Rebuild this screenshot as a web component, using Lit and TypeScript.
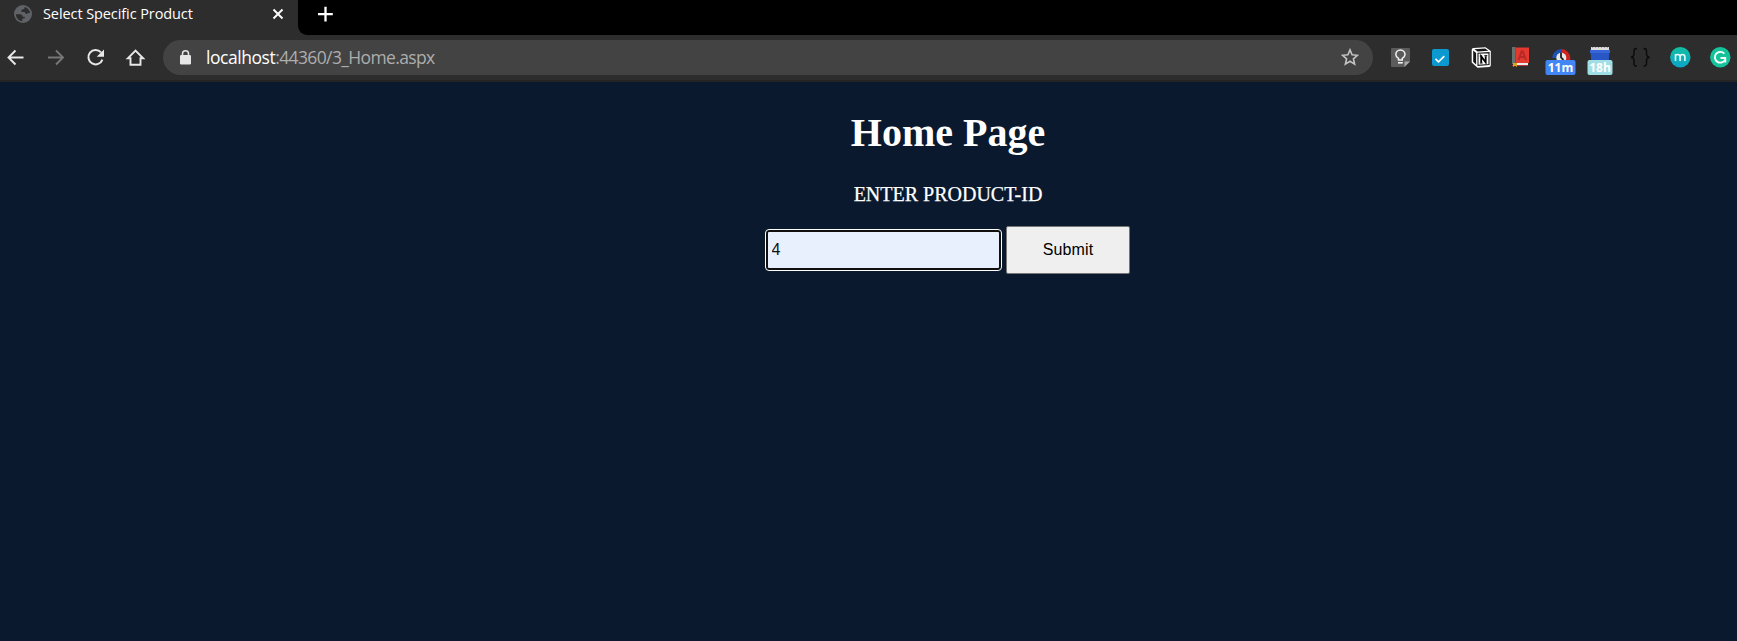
import { LitElement, html, css, svg } from "lit";
import { customElement } from "lit/decorators.js";

@customElement("tab-strip")
class TabStrip extends LitElement {
  static styles = css`
    :host { display: block; height: 35px; background: #2d2d2d; color: #fff; font-family: "Open Sans", sans-serif; }
    .strip { display: flex; height: 35px; }
    .tab { display: flex; align-items: flex-start; width: 298px; box-sizing: border-box; padding-left: 14px; flex: none; }
    .globe { display: block; margin-top: 5px; }
    .title { margin-left: 11px; width: 229px; font-size: 14.5px; line-height: 28px; white-space: nowrap; letter-spacing: -0.09px; }
    .close { display: block; margin-top: 8px; }
    .rest { flex: 1; background: #000; border-bottom-left-radius: 9px; padding: 6px 0 0 19px; }
    .rest svg { display: block; }
  `;
  render() {
    return html`<div class="strip">
      <div class="tab">
        <svg class="globe" width="18" height="18" viewBox="0 0 18 18">
          <circle cx="9" cy="9" r="9" fill="#5f6368" />
          <path d="M1.9 9.200h4.200c1.700 0 2.600.9 2.600 2.500h2v1.900H8.300v2.500C4.700 15.900 1.900 12.900 1.900 9.200z" fill="#2d2d2d" />
          <path d="M10.600 2.100c2.900.6 5.100 3.100 5.500 6h-1.900c-.6 0-1 .8-1.600.8-1.300 0-1.800-.8-1.800-1.800H7.400V5.300c0-.9.8-.9 1.700-.9.900 0 1.500-1 1.500-2.300z" fill="#2d2d2d" />
        </svg>
        <span class="title">Select Specific Product</span>
        <svg class="close" width="12" height="12" viewBox="0 0 12 12"><path d="M1.500 1.500l9 9M10.500 1.500l-9 9" stroke="#fff" stroke-width="1.900" /></svg>
      </div>
      <div class="rest">
        <svg width="18" height="16" viewBox="0 0 18 16"><path d="M8.500.8v14.600M1 8.100h14.800" stroke="#fff" stroke-width="2.300" /></svg>
      </div>
    </div>`;
  }
}

const extensionIcons = [
  svg`<path d="M8 8h17a1 1 0 0 1 1 1v12.500L20.500 27H8a1 1 0 0 1-1-1V9a1 1 0 0 1 1-1z" fill="#5b5b5b"/><path d="M20.500 27v-5.500H26z" fill="#aaa"/>
    <path d="M14.500 20v-1.600c-1.700-1-2.700-2.200-2.700-3.900a4.600 4.600 0 0 1 9.200 0c0 1.700-1 2.900-2.700 3.900V20z" fill="none" stroke="#f2f2f2" stroke-width="1.500"/><path d="M14 22h4.800v1.600H14z" fill="#f2f2f2"/>`,
  svg`<rect x="8" y="9" width="17" height="17" rx="2" fill="#0b99cf"/><path d="M11.500 18.900l3 2.900 5.800-5.600" fill="none" stroke="#fff" stroke-width="1.600"/>`,
  svg`<path d="M9.500 8L21.500 7.200l5.300 3.700v14.400a1.800 1.800 0 0 1-1.800 1.800l-11.500.6-5.800-5.300V9.800A1.800 1.800 0 0 1 9.500 8z" fill="#fff"/>
    <path d="M9.200 10.500l2.900 2.400v11.600l-2.900-2.800z" fill="#161616"/><path d="M10.400 9.300l10.700-.7 3.200 2.200-10.600.8z" fill="#161616"/>
    <path d="M14 13.300l11-.7v11.900l-11 .8z" fill="#fff" stroke="#161616" stroke-width="1.100"/>
    <path d="M17.200 22.700v-6.200l4.500 5.800v-6.100" fill="none" stroke="#000" stroke-width="1.800"/><path d="M15.700 16h2.500M20.400 15.700h2.900M15.800 23h2.800" stroke="#000" stroke-width="1"/>`,
  svg`<path d="M8 7h3.500v17H8z" fill="#69716f"/><path d="M11.500 7.500H25V23H11.500z" fill="#e5392f"/><path d="M14.500 20l3.200-8.800h1l3.200 8.800M15.800 17h4.800" fill="none" stroke="#b52a29" stroke-width="2"/><path d="M11 23h13v2H11z" fill="#e9edf0"/><path d="M8 25h16v1H8z" fill="#b63434"/><path d="M9 23h4v4l-2-1.300L9 27z" fill="#d3a91b"/>`,
  svg`<path d="M8.300 18a9 9 0 0 1 9-9v9z" fill="#1c51b5"/><path d="M17.300 9a9 9 0 0 1 9 9v2h-9z" fill="#cf241b"/><circle cx="17.300" cy="17.700" r="5" fill="#e8e8e8"/><path d="M17 12.500v5l2.500 2.500" fill="none" stroke="#222" stroke-width="1.800"/>
    <rect x="1.500" y="20" width="30" height="15" rx="2" fill="#4285f4"/><text x="16.500" y="32" text-anchor="middle" font-family="Open Sans, sans-serif" font-weight="700" font-size="12" fill="#fff">11m</text>`,
  svg`<path d="M7.500 9h19l-.6 11H8.100z" fill="#2856c5"/><path d="M7 10h20v3H7z" fill="#3565d8"/><path d="M8 7h18v3H8z" fill="#ddd"/><path d="M9 7.500h16" stroke="#999" stroke-width="1" stroke-dasharray="1 2"/>
    <rect x="4.500" y="20" width="25" height="15" rx="2" fill="#a1dfe7"/><text x="17" y="32" text-anchor="middle" font-family="Open Sans, sans-serif" font-weight="700" font-size="12" fill="#fff">18h</text>`,
  svg`<path d="M14 8.500c-3 0-3 1-3 3.300v2.200c0 2-.8 3-3 3.300 2.200.3 3 1.300 3 3.300v2.200c0 2.300 0 3.300 3 3.300M20.500 8.500c3 0 3 1 3 3.300v2.200c0 2 .8 3 3 3.300-2.200.3-3 1.300-3 3.300v2.200c0 2.300 0 3.300-3 3.300" fill="none" stroke="#0c0c0c" stroke-width="1.500"/>`,
  svg`<circle cx="17.300" cy="17.300" r="10.200" fill="url(#teal)"/><path d="M12.500 21v-7m0 2.600c0-1.600.8-2.100 2.200-2.100 1.600 0 2.400.8 2.400 2.400V21m0-4.100c0-1.600.8-2.400 2.300-2.400 1.700 0 2.500.8 2.500 2.400V21" fill="none" stroke="#e7fafa" stroke-width="1.600"/>
    <defs><linearGradient id="teal" x1="0" y1="0" x2="0" y2="1"><stop offset="0" stop-color="#12bfa1"/><stop offset="1" stop-color="#0ba5ca"/></linearGradient></defs>`,
  svg`<circle cx="17.300" cy="17.300" r="10.200" fill="#15c39a"/><path d="M21.300 13.600a5.400 5.400 0 1 0 .7 6.300" fill="none" stroke="#fff" stroke-width="1.900"/><path d="M17.500 18h4.800v4.500" fill="none" stroke="#fff" stroke-width="1.800"/>`,
];

@customElement("nav-toolbar")
class NavToolbar extends LitElement {
  static styles = css`
    :host { display: block; height: 47px; background: #2d2d2d; box-sizing: border-box; border-bottom: 2px solid #242424; font-family: "Open Sans", sans-serif; }
    .bar { display: flex; align-items: flex-start; padding-top: 5px; }
    svg { display: block; flex: none; }
    .nav { display: flex; width: 163px; flex: none; }
    .nav svg { margin-right: 6px; }
    .pill { display: flex; width: 1210px; height: 35px; border-radius: 18px; background: #434343; flex: none; box-sizing: border-box; padding-left: 17px; }
    .lock { margin-top: 10px; }
    .url { margin-left: 15px; width: 1135px; font-size: 17.5px; line-height: 35px; color: #adadad; white-space: nowrap; letter-spacing: -0.63px; }
    .host { color: #fff; letter-spacing: -0.45px; }
    .star { margin-top: 8px; }
    .extensions { display: flex; margin-left: 11px; gap: 5.9px; }
  `;
  render() {
    return html`<div class="bar">
      <div class="nav">
        <svg width="34" height="35" viewBox="0 0 34 35"><path d="M23.500 17.500H8.800M15.500 10.500l-7 7 7 7" fill="none" stroke="#e8e8e8" stroke-width="1.900"/></svg>
        <svg width="34" height="35" viewBox="0 0 34 35"><path d="M8 17.500h14.700M16 10.500l7 7-7 7" fill="none" stroke="#777" stroke-width="1.900"/></svg>
        <svg width="34" height="35" viewBox="0 0 34 35"><path d="M21 12.400a7.200 7.200 0 1 0 1.400 7.200" fill="none" stroke="#e8e8e8" stroke-width="2"/><path d="M24 9.500v7.300h-7.300z" fill="#e8e8e8"/></svg>
        <svg width="34" height="35" viewBox="0 0 34 35"><path d="M7.800 18.300L15.500 10.600l7.700 7.700h-2.700v6.400h-10v-6.400z" fill="none" stroke="#e8e8e8" stroke-width="1.900"/></svg>
      </div>
      <div class="pill">
        <svg class="lock" width="11" height="15" viewBox="0 0 11 15"><rect y="5" width="11" height="9.500" rx="1.200" fill="#e6e6e6"/><path d="M2.500 6V3.800a3 3 0 0 1 6 0V6" fill="none" stroke="#e6e6e6" stroke-width="1.500"/></svg>
        <span class="url"><span class="host">localhost</span>:44360/3_Home.aspx</span>
        <svg class="star" width="18" height="18" viewBox="0 0 18 18"><path d="M9 1.900l2.100 4.900 5.400.5-4.100 3.500 1.200 5.300L9 13.300l-4.600 2.800 1.200-5.300-4.100-3.500 5.400-.5z" fill="none" stroke="#c4c4c4" stroke-width="1.600"/></svg>
      </div>
      <div class="extensions">${extensionIcons.map((icon) => html`<svg width="34" height="35" viewBox="0 0 34 35">${icon}</svg>`)}</div>
    </div>`;
  }
}

@customElement("home-page")
class HomePage extends LitElement {
  static styles = css`
    :host { display: block; flex: 1; background: #0a192e; color: #fff; font-family: "Liberation Serif", "Times New Roman", serif; }
    .column { width: 1896px; text-align: center; }
    h1 { margin: 0; padding-top: 28px; font-size: 40px; line-height: 46px; }
    p { margin: 0; padding-top: 27px; font-size: 20px; line-height: 23px; -webkit-text-stroke: 0.25px #fff; }
    form { display: flex; justify-content: center; align-items: center; gap: 5px; padding-top: 20px; }
    input { width: 235px; height: 40px; box-sizing: border-box; padding: 1px 3.5px; margin: 0; border: 2px solid #101010; border-radius: 3px; outline: 1px solid #fff; background: #e8f0fe; color: #111; font: 16px "Liberation Sans", Arial, sans-serif; }
    button { width: 124px; height: 48px; padding: 0; margin: 0; border: 1px solid #767676; border-radius: 2px; background: #efefef; color: #000; font: 16px "Liberation Sans", Arial, sans-serif; letter-spacing: 0.15px; }
  `;
  render() {
    return html`<div class="column">
      <h1>Home Page</h1>
      <p>ENTER PRODUCT-ID</p>
      <form><input type="text" .value=${"4"} /><button type="button">Submit</button></form>
    </div>`;
  }
}

@customElement("app-root")
class AppRoot extends LitElement {
  static styles = css`
    :host { display: flex; flex-direction: column; width: 100%; height: 641px; overflow: hidden; }
  `;
  render() {
    return html`<tab-strip></tab-strip><nav-toolbar></nav-toolbar><home-page></home-page>`;
  }
}
